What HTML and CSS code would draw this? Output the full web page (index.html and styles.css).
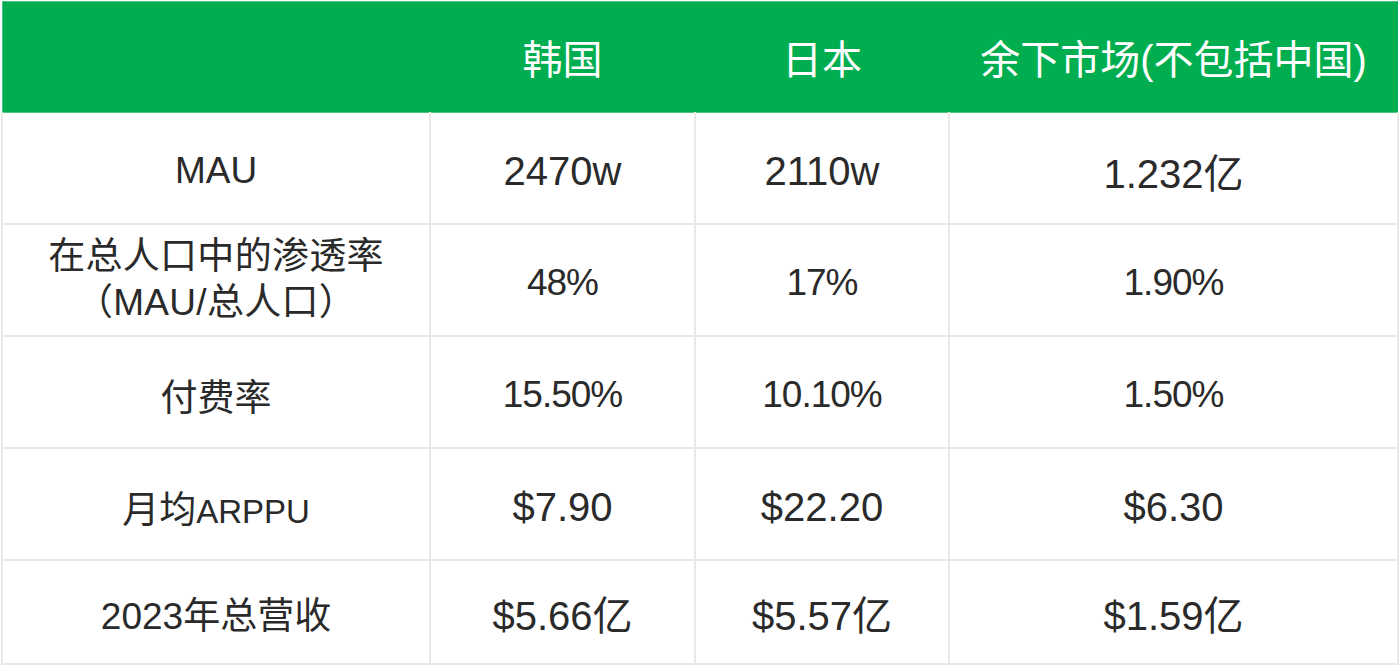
FILE: index.html
```html
<!DOCTYPE html>
<html lang="zh">
<head>
<meta charset="utf-8">
<title>市场对比</title>
<link rel="stylesheet" href="styles.css">
</head>
<body>
<table class="grid">
  <colgroup>
    <col class="c1"><col class="c2"><col class="c3"><col class="c4">
  </colgroup>
  <thead>
    <tr class="head">
      <th></th>
      <th>韩国</th>
      <th>日本</th>
      <th>余下市场(不包括中国)</th>
    </tr>
  </thead>
  <tbody>
    <tr>
      <td>MAU</td>
      <td class="wide">2470w</td>
      <td class="wide">2110w</td>
      <td class="wide">1.232亿</td>
    </tr>
    <tr>
      <td class="two">在总人口中的渗透率<br>（MAU/总人口）</td>
      <td class="narrow">48%</td>
      <td class="narrow">17%</td>
      <td class="narrow">1.90%</td>
    </tr>
    <tr>
      <td class="cjk">付费率</td>
      <td class="narrow">15.50%</td>
      <td class="narrow">10.10%</td>
      <td class="narrow">1.50%</td>
    </tr>
    <tr>
      <td class="cjk">月均<span class="small">ARPPU</span></td>
      <td class="wide">$7.90</td>
      <td class="wide">$22.20</td>
      <td class="wide">$6.30</td>
    </tr>
    <tr class="last">
      <td class="cjk">2023年总营收</td>
      <td class="wide">$5.66亿</td>
      <td class="wide">$5.57亿</td>
      <td class="wide">$1.59亿</td>
    </tr>
  </tbody>
</table>
</body>
</html>
```

FILE: styles.css
```css
html, body {
  margin: 0;
  padding: 0;
  background: #ffffff;
}

body {
  padding: 1px 0 0 1px;
  font-family: "Liberation Sans", "Noto Sans CJK SC", sans-serif;
  color: #2a2a2a;
}

.grid {
  border-collapse: collapse;
  table-layout: fixed;
  width: 1396px;
}

.c1 { width: 428px; }
.c2 { width: 265px; }
.c3 { width: 254px; }
.c4 { width: 449px; }

.grid th,
.grid td {
  text-align: center;
  vertical-align: middle;
  padding: 0;
}

.head th {
  height: 110px;
  background: #00ae4f;
  color: #ffffff;
  font-size: 40px;
  font-weight: 400;
  border: 1px solid #4cc37f;
  border-right: none;
  border-left: none;
}

.head th:first-child {
  border-left: 1px solid #4cc37f;
}

.grid td {
  height: 104px;
  padding-top: 6px;
  font-size: 37px;
  border: 2px solid #e8e8e8;
  border-top: none;
}

.grid td.two {
  line-height: 46px;
  font-size: 37px;
  padding-top: 0;
  letter-spacing: 0.3px;
}

.grid td.narrow {
  letter-spacing: -1px;
}

.grid td.wide {
  font-size: 40px;
}

.grid td.cjk {
  font-size: 37px;
}

.small {
  font-size: 33px;
}

.last td {
  height: 100px;
  padding-top: 2px;
}
```
